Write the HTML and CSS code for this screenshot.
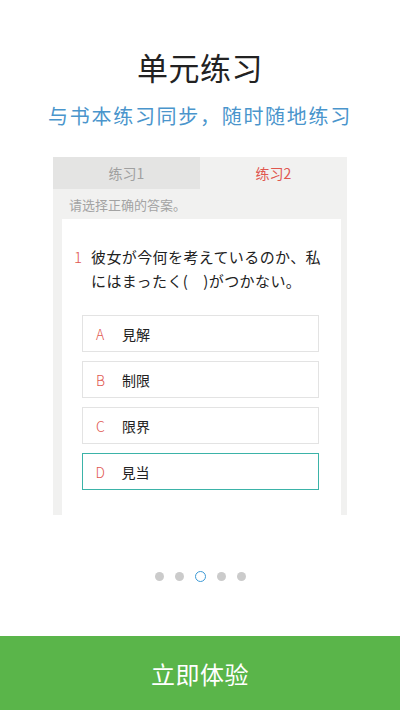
FILE: index.html
```html
<!DOCTYPE html>
<html lang="zh">
<head>
<meta charset="utf-8">
<link rel="stylesheet" href="styles.css">
</head>
<body>
<div class="page">
  <h1 class="title">单元练习</h1>
  <p class="subtitle">与书本练习同步，随时随地练习</p>
  <div class="shot">
    <div class="tabs">
      <div class="tab">练习1</div>
      <div class="tab active">练习2</div>
    </div>
    <div class="hint">请选择正确的答案。</div>
    <div class="qcard">
      <div class="question">
        <span class="qnum">1</span>
        <span class="qtext" lang="ja">彼女が今何を考えているのか、私にはまったく(&nbsp;&nbsp;&nbsp;&nbsp;)がつかない。</span>
      </div>
      <div class="options">
        <div class="opt"><span class="letter">A</span><span lang="ja">見解</span></div>
        <div class="opt"><span class="letter">B</span><span lang="ja">制限</span></div>
        <div class="opt"><span class="letter">C</span><span lang="ja">限界</span></div>
        <div class="opt selected"><span class="letter">D</span><span lang="ja">見当</span></div>
      </div>
    </div>
  </div>
  <div class="dots">
    <span class="dot"></span><span class="dot"></span><span class="dot on"></span><span class="dot"></span><span class="dot"></span>
  </div>
  <div class="cta">立即体验</div>
</div>
</body>
</html>
```
FILE: styles.css
```css
* { box-sizing: border-box; margin: 0; padding: 0; }
body {
  margin: 0;
  background: #fff;
  font-family: "Noto Sans CJK SC", "Noto Sans CJK JP", "Noto Sans", sans-serif;
}
.page {
  width: 400px;
  height: 710px;
  display: flex;
  flex-direction: column;
  align-items: center;
  overflow: hidden;
}
.title {
  margin-top: 46px;
  font-size: 31px;
  font-weight: 400;
  line-height: 42px;
  color: #222;
  letter-spacing: 0.5px;
}
.subtitle {
  margin-top: 14px;
  font-size: 20px;
  line-height: 28px;
  color: #4a95cc;
  letter-spacing: 1.7px;
}
.shot {
  margin-top: 27px;
  width: 294px;
  height: 358px;
  background: #f1f1f0;
  display: flex;
  flex-direction: column;
  overflow: hidden;
}
.tabs {
  display: flex;
  height: 32px;
}
.tab {
  flex: 1;
  display: flex;
  align-items: center;
  justify-content: center;
  font-size: 14px;
  color: #a0a0a0;
  background: #e4e4e3;
}
.tab.active {
  background: #f1f1f0;
  color: #e0574f;
}
.hint {
  height: 30px;
  padding-left: 16px;
  display: flex;
  align-items: center;
  font-size: 13px;
  color: #a3a3a3;
}
.qcard {
  margin: 0 6px 0 9px;
  flex: 1;
  background: #fff;
  padding: 26px 14px 0 11px;
}
.question {
  display: flex;
  font-size: 15px;
  line-height: 24px;
  color: #222;
}
.qnum {
  color: #e0574f;
  width: 18px;
  flex-shrink: 0;
  padding-left: 1px;
  font-weight: 300;
}
.qtext {
  font-family: "Noto Sans CJK JP", "Noto Sans CJK SC", sans-serif;
  letter-spacing: 0.4px;
}
.options {
  margin: 22px 8px 0 9px;
  display: flex;
  flex-direction: column;
  gap: 9px;
}
.opt {
  height: 37px;
  border: 1px solid #e3e3e3;
  display: flex;
  align-items: center;
  padding-left: 13px;
  font-size: 14px;
  color: #222;
}
.opt .letter {
  color: #e0574f;
  width: 26px;
  font-weight: 300;
}
.opt.selected {
  border: 1.5px solid #3bb3a8;
  padding-left: 12.5px;
}
.dots {
  margin-top: 55px;
  display: flex;
  gap: 11px;
  align-items: center;
  height: 12px;
}
.dot {
  width: 9px;
  height: 9px;
  border-radius: 50%;
  background: #cbcbcb;
}
.dot.on {
  width: 11px;
  height: 11px;
  background: transparent;
  border: 1.5px solid #3c9ad6;
}
.cta {
  margin-top: auto;
  width: 400px;
  height: 74px;
  background: #5ab54a;
  color: #fff;
  font-size: 24px;
  display: flex;
  align-items: center;
  justify-content: center;
  letter-spacing: 0.5px;
}
```
